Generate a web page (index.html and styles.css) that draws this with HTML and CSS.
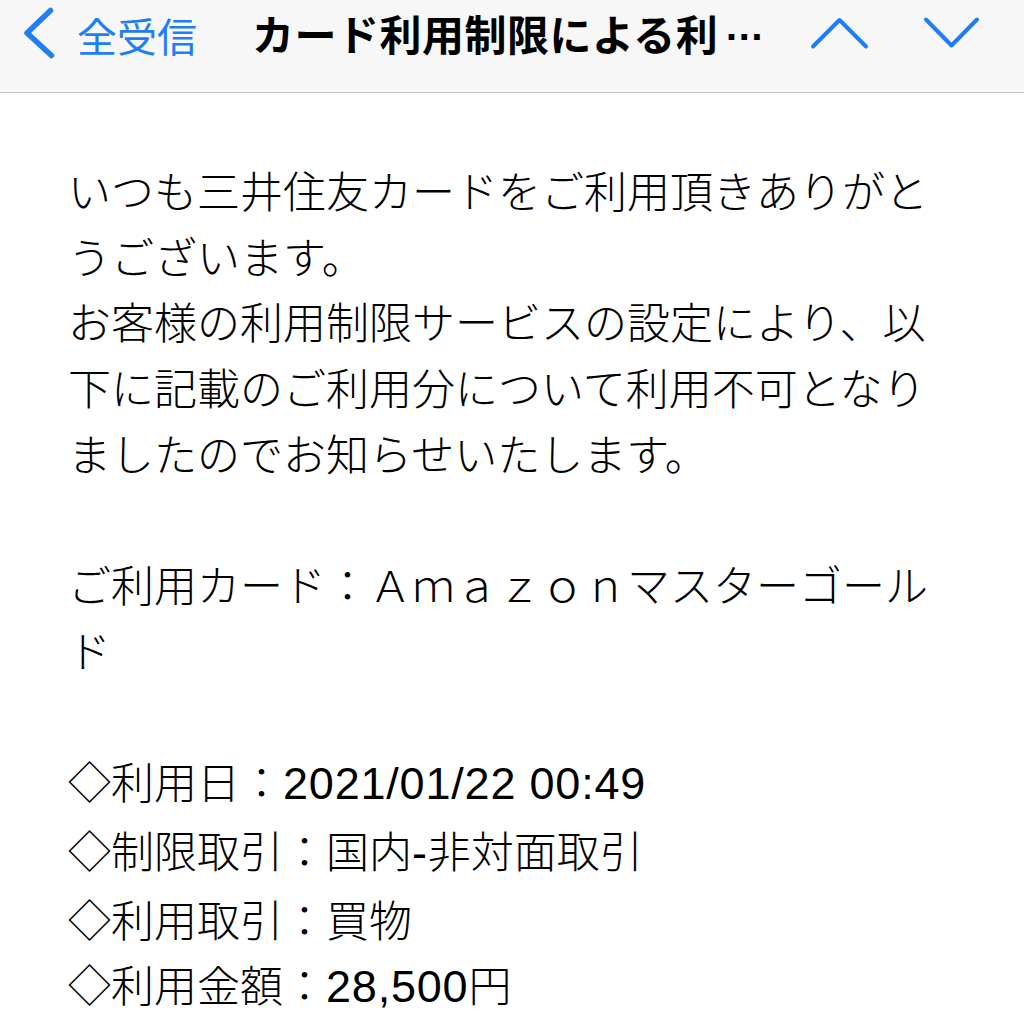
FILE: index.html
```html
<!DOCTYPE html>
<html lang="ja">
<head>
<meta charset="utf-8">
<link rel="stylesheet" href="styles.css">
</head>
<body>
<header class="nav">
  <svg class="back-icon" width="40" height="60" viewBox="16 5 40 60"><polyline points="50.5,10.5 27,33 51.5,55.5" fill="none" stroke="#1f7ef3" stroke-width="5.5" stroke-linecap="round" stroke-linejoin="round"/></svg>
  <span class="back-label">全受信</span>
  <span class="title">カード利用制限による利<span class="ellipsis">…</span></span>
  <svg class="up-icon" width="60" height="40" viewBox="808 15 60 40"><polyline points="813,46.5 839.5,20 866,46.5" fill="none" stroke="#1f7ef3" stroke-width="4" stroke-linecap="round" stroke-linejoin="round"/></svg>
  <svg class="down-icon" width="60" height="40" viewBox="921 15 60 40"><polyline points="926,19.5 951.5,45.5 977,19.5" fill="none" stroke="#1f7ef3" stroke-width="4" stroke-linecap="round" stroke-linejoin="round"/></svg>
</header>
<main class="mail">
  <p>いつも三井住友カードをご利用頂きありがとうございます。</p>
  <p>お客様の利用制限サービスの設定により、以下に記載のご利用分について利用不可となりましたのでお知らせいたします。</p>
  <p class="blank">&nbsp;</p>
  <p>ご利用カード：Ａｍａｚｏｎマスターゴールド</p>
  <p class="blank">&nbsp;</p>
  <p>◇利用日：<span class="num">2021/01/22 00:49</span></p>
  <p>◇制限取引：国内<span class="num">-</span>非対面取引</p>
  <p>◇利用取引：買物</p>
  <p>◇利用金額：<span class="num">28,500</span>円</p>
</main>
</body>
</html>
```

FILE: styles.css
```css
html, body {
  margin: 0;
  padding: 0;
  background: #ffffff;
}
body {
  width: 1024px;
  height: 1024px;
  overflow: hidden;
  font-family: "Noto Sans CJK JP", "Noto Sans", sans-serif;
  color: #000;
}
.nav {
  box-sizing: border-box;
  height: 93px;
  padding: 0 43px 23px 0;
  background: #f7f7f7;
  border-bottom: 1.5px solid #c4c4c4;
  display: flex;
  align-items: center;
}
.back-icon {
  margin-left: 16px;
  flex: none;
  overflow: visible;
}
.back-label {
  margin-left: 21px;
  font-size: 40px;
  color: #1f7ef3;
  line-height: 1;
}
.title {
  margin-left: 55px;
  font-size: 42px;
  font-weight: 700;
  line-height: 1;
  letter-spacing: 0.5px;
  white-space: nowrap;
}
.ellipsis {
  display: inline-block;
  margin-left: 6px;
  font-family: "Liberation Sans", sans-serif;
  font-size: 40px;
  font-weight: 700;
  letter-spacing: 0;
  transform: translateY(-11px);
}
.up-icon {
  margin-left: auto;
  flex: none;
  overflow: visible;
}
.down-icon {
  margin-left: 53px;
  flex: none;
  overflow: visible;
}
.mail {
  padding: 64px 0 0 68px;
  width: 866px;
  font-size: 43px;
  font-weight: 300;
  line-height: 65.7px;
}
.mail p {
  margin: 0;
}
.num {
  font-family: "Liberation Sans", sans-serif;
  font-size: 45px;
  font-weight: 400;
  letter-spacing: 0.8px;
}
```
